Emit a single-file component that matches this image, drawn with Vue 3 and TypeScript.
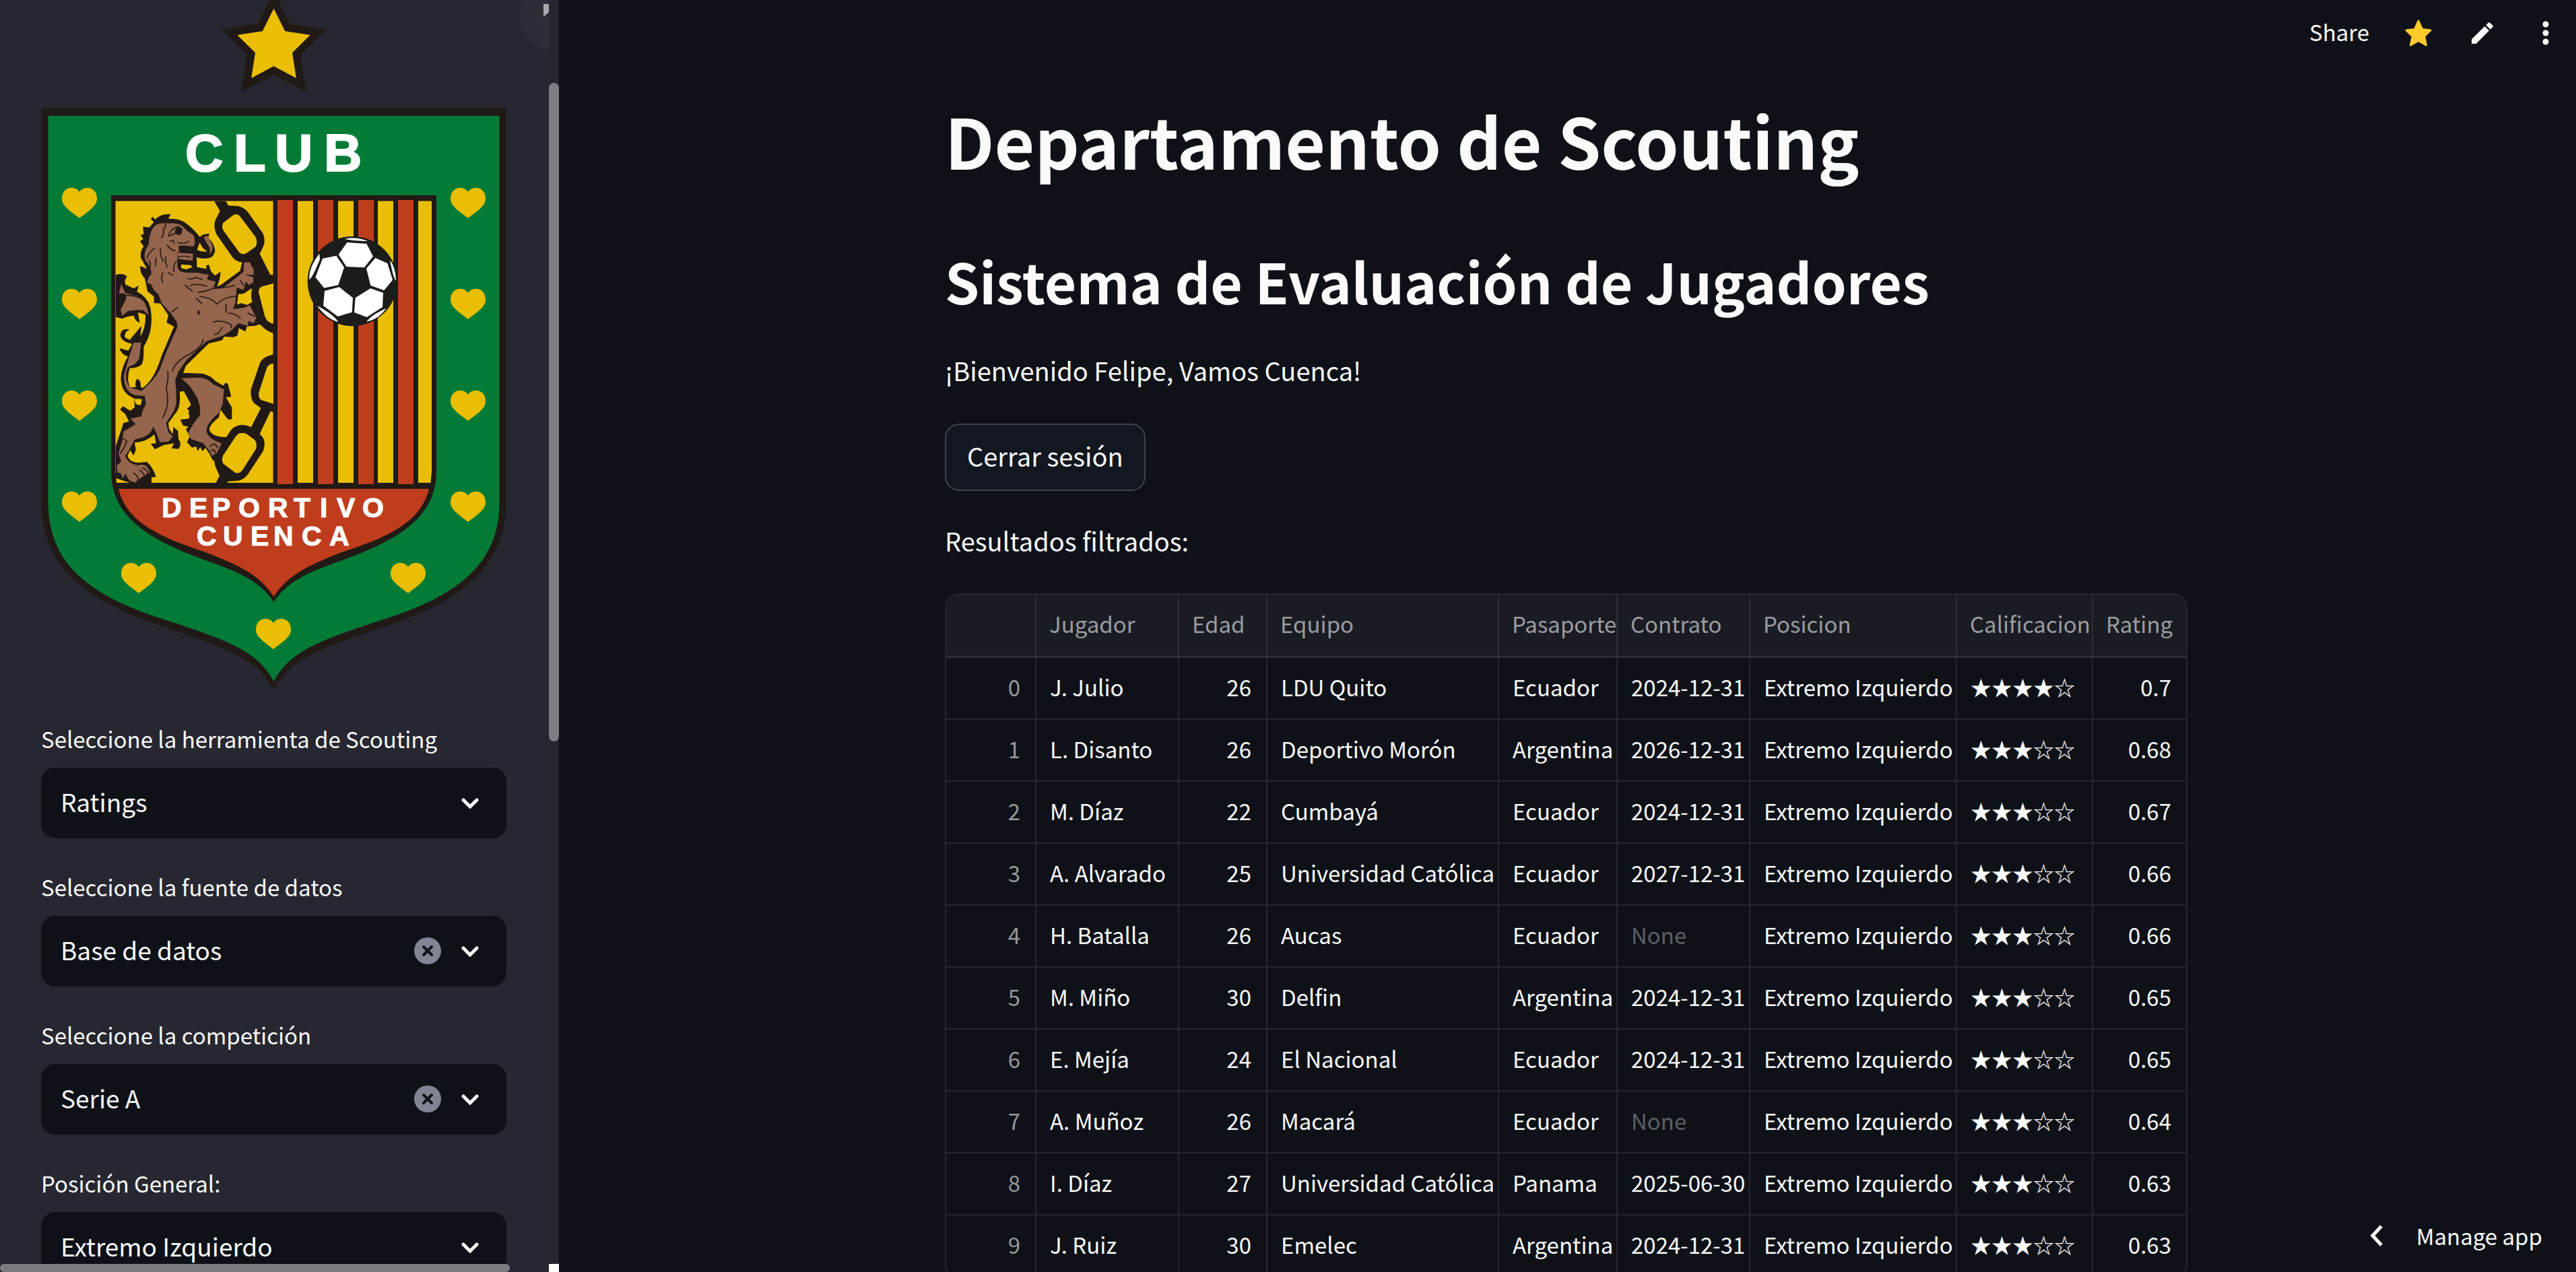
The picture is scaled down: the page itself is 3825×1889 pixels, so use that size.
<script setup lang="ts">
import { ref } from 'vue'

interface Field {
  id: string
  label: string
  value: string
  clearable: boolean
}

interface Player {
  name: string
  age: number
  team: string
  passport: string
  contract: string | null
  stars: number
  rating: string
}

const fields = ref<Field[]>([
  { id: 'tool', label: 'Seleccione la herramienta de Scouting', value: 'Ratings', clearable: false },
  { id: 'source', label: 'Seleccione la fuente de datos', value: 'Base de datos', clearable: true },
  { id: 'league', label: 'Seleccione la competición', value: 'Serie A', clearable: true },
  { id: 'position', label: 'Posición General:', value: 'Extremo Izquierdo', clearable: false },
])

const players: Player[] = [
  { name: 'J. Julio', age: 26, team: 'LDU Quito', passport: 'Ecuador', contract: '2024-12-31', stars: 4, rating: '0.7' },
  { name: 'L. Disanto', age: 26, team: 'Deportivo Morón', passport: 'Argentina', contract: '2026-12-31', stars: 3, rating: '0.68' },
  { name: 'M. Díaz', age: 22, team: 'Cumbayá', passport: 'Ecuador', contract: '2024-12-31', stars: 3, rating: '0.67' },
  { name: 'A. Alvarado', age: 25, team: 'Universidad Católica', passport: 'Ecuador', contract: '2027-12-31', stars: 3, rating: '0.66' },
  { name: 'H. Batalla', age: 26, team: 'Aucas', passport: 'Ecuador', contract: null, stars: 3, rating: '0.66' },
  { name: 'M. Miño', age: 30, team: 'Delfin', passport: 'Argentina', contract: '2024-12-31', stars: 3, rating: '0.65' },
  { name: 'E. Mejía', age: 24, team: 'El Nacional', passport: 'Ecuador', contract: '2024-12-31', stars: 3, rating: '0.65' },
  { name: 'A. Muñoz', age: 26, team: 'Macará', passport: 'Ecuador', contract: null, stars: 3, rating: '0.64' },
  { name: 'I. Díaz', age: 27, team: 'Universidad Católica', passport: 'Panama', contract: '2025-06-30', stars: 3, rating: '0.63' },
  { name: 'J. Ruiz', age: 30, team: 'Emelec', passport: 'Argentina', contract: '2024-12-31', stars: 3, rating: '0.63' },
]

const headers = ['', 'Jugador', 'Edad', 'Equipo', 'Pasaporte', 'Contrato', 'Posicion', 'Calificacion', 'Rating']

const starText = (n: number): string => '★'.repeat(n) + '☆'.repeat(5 - n)

const hearts: [number, number][] = [
  [118, 279], [118, 429], [118, 580], [118, 730],
  [695, 279], [695, 429], [695, 580], [695, 730],
  [206, 836], [606, 836], [406, 919],
]

const stripes = [
  { x: 412, red: true }, { x: 442, red: false }, { x: 472, red: true }, { x: 502, red: false },
  { x: 532, red: true }, { x: 561, red: false }, { x: 591, red: true },
]
</script>

<template>
  <div class="app">
    <aside class="sidebar">
      <div class="scroll">
        <svg class="crest" viewBox="61 0 691 1030" role="img" aria-label="Club Deportivo Cuenca">
          <defs>
            <clipPath id="field"><rect x="65" y="56" width="703" height="1256" /></clipPath>
          </defs>
          <polygon fill="#211915" points="406.5,-12 430.7,35.7 484.8,43.7 446,81 454.8,136.3 406.5,111 358.2,136.3 367,81 328.2,43.7 382.3,35.7" />
          <polygon fill="#e9be04" points="406.5,12.7 423.2,46.3 460.7,52 434,78.3 439.8,116 406.5,98.3 373.2,116 379,78.3 352.3,52 389.8,46.3" />
          <path fill="#211915" d="M61.5 160H751.5V745C751.5 840 688 892 572 930C478 962 430 978 406.5 1024C383 978 335 962 241 930C125 892 61.5 840 61.5 745Z" />
          <path fill="#037b37" d="M71.5 172H741.5V745C741.5 832 688 882 572 919C478 950 430 966 406.5 1012C383 966 335 950 241 919C125 882 71.5 832 71.5 745Z" />
          <path fill="#211915" d="M165 290H648V700C648 770 588 803 508 832C463 848 427 862 406.5 894C386 862 350 848 305 832C225 803 165 770 165 700Z" />
          <path fill="#bf3d1d" d="M176 726H637C625 775 578 797 508 820C463 838 429 851 406.5 886C384 851 350 838 305 820C235 797 188 775 176 726Z" />
          <path fill="#e9be04" d="M171.5 298.5H405.5V717H173L171.5 700Z" />
          <rect v-for="s in stripes" :key="s.x" :x="s.x" :y="s.red ? 297 : 298.5" width="23" :height="s.red ? 422 : 418.5" :fill="s.red ? '#bf3d1d' : '#e9be04'" />
          <path fill="#e9be04" d="M621 298.5H641V700L639.5 717H621Z" />
          <path v-for="h in hearts" :key="h.join()" fill="#e9be04" :transform="`translate(${h[0]} ${h[1]})`" d="M0 6C-4 0 -10 0 -12 0C-21 0 -26 7 -26 16C-26 27 -14 34 0 45C14 34 26 27 26 16C26 7 21 0 12 0C10 0 4 0 0 6Z" />
          <g class="crest-text">
            <text font-size="78" stroke-width="2" y="254" x="275 347 408 481">CLUB</text>
            <text font-size="41" y="768" x="240 281 315 354 398 436 475 500 538">DEPORTIVO</text>
            <text font-size="41" y="810" x="292 331 372 406 448 489">CUENCA</text>
          </g>

          <!-- football -->
          <g transform="translate(390 280) scale(0.33333)" fill="#fff">
            <circle cx="400" cy="413" r="200" fill="#1c1c1a" />
            <polygon points="376,240 463,246 492,302 453,352 373,348 338,294" />
            <polygon points="267,312 328,299 363,351 337,430 274,443 235,395" />
            <polygon points="502,309 556,333 579,407 541,454 481,432 462,356" />
            <polygon points="341,439 402,487 398,551 335,570 270,522 276,456" />
            <polygon points="480,445 537,464 534,528 464,573 408,552 413,487" />
            <path d="M365 225Q415 213 468 234Q415 236 365 225ZM253 290Q205 350 208 405Q222 398 255 315ZM567 318Q592 350 594 410Q582 402 567 318ZM242 522Q290 585 337 594Q315 560 242 522ZM551 533Q520 580 463 594Q480 565 551 533Z" />
          </g>

          <!-- chain and lion -->
          <g transform="translate(150 280) scale(0.33333)">
            <g clip-path="url(#field)">
              <path fill="#211915" d="M503 54H555L567 76L610 78Q637 83 655 106L720 198Q736 228 722 260L707 290L754 384L770 386V645Q735 635 712 608L690 600L672 500Q664 460 672 430L680 330L625 328Q600 324 585 305L515 205Q500 175 508 145L530 100Z" />
              <path fill="#211915" d="M770 737L735 750Q712 762 705 785L668 895Q664 930 680 955L712 978L669 1063Q630 1045 600 1060Q580 1070 570 1090L508 1185Q500 1210 510 1240L528 1280L510 1314H560L565 1305L605 1302Q635 1300 655 1272L722 1170Q735 1135 722 1110L707 1093L755 992L770 996Z" />
              <g fill="#e9be04">
                <path d="M545 152L590 118Q606 110 618 122L688 215Q698 235 690 258L648 288Q630 298 616 285L545 187Q535 165 545 152Z" />
                <path d="M770 422L715 437Q700 445 703 465L730 570Q740 600 770 602Z" />
                <path d="M770 779Q745 782 738 800L703 910Q700 935 715 943L770 960Z" />
                <path d="M612 1092Q630 1085 648 1093L683 1118Q698 1135 690 1160L630 1255Q615 1272 598 1266L545 1226Q535 1210 543 1190L600 1105Z" />
              </g>

              <!-- tail -->
              <path fill="#211915" d="M65 385Q100 375 116 392Q100 410 110 428L145 445Q160 440 168 430L160 460Q205 480 220 530Q238 630 190 704Q192 770 180 785Q160 800 128 800Q112 850 130 885L155 885Q150 860 160 848Q178 850 177 885L210 900L200 940L150 935Q90 915 88 845Q90 800 120 748Q90 740 82 711L122 722L138 692Q85 680 86 650Q92 620 128 628Q100 640 108 665L128 674L180 612L175 660Q200 620 198 562L165 552L172 597Q150 590 146 566Q110 570 95 580L65 572Z" />
              <path fill="#95654d" d="M90 425L108 465L165 480Q205 505 211 565L190 543L165 541L120 545L95 568L87 540L110 497L112 480L80 470ZM145 688L178 686L170 755Q155 785 130 790L108 810Q125 750 145 688Z" />

              <!-- body outline -->
              <path fill="#211915" d="M235 150L222 135L230 126L242 138Q262 112 310 114L300 134Q345 134 372 150Q412 178 440 216Q455 200 482 202L478 220Q504 245 508 275Q505 305 480 310Q450 315 426 306L427 350L470 358L468 345L480 338L490 370L508 388L533 370Q530 410 517 435L530 432L620 366L628 328L700 300L700 420L655 468L612 470L606 515L625 510L650 518L672 506L692 535L705 605L685 612L650 614L643 637L614 622L608 655L590 662L548 660L540 676L480 690L378 790L366 821L450 824Q485 830 510 858L545 878L555 865L565 870L580 927L556 930L583 975V1028L565 1028L532 985L525 1020Q484 1050 482 1075Q495 1108 560 1108L542 1150L500 1215L482 1180L465 1155L452 1170L442 1152L430 1170L425 1150L405 1154L383 1130L395 1105L378 1072L390 1062L365 1055L353 1030L390 1025L402 1000L383 980L402 965L398 935L370 902L350 905Q356 960 340 990L300 1045L303 1070L320 1095L322 1062L343 1080L345 1115Q362 1140 345 1160L315 1157L325 1135L280 1142L240 1162L222 1138L245 1135L238 1095Q200 1130 150 1132L155 1165L145 1190L130 1165L118 1190Q125 1218 165 1222L205 1218Q230 1240 245 1284L225 1288V1312H130L65 1290V1150L85 1090L100 1045L125 1038L108 1005L85 985L98 970L130 990L150 975L148 935L180 892Q235 860 270 745L325 615L292 597L300 565L265 512L236 510L235 480L207 458L195 400Q172 380 175 345L205 358L178 310Q172 280 190 258L174 235L188 225L176 205H190L187 170L215 173Z" />

              <!-- body fill -->
              <path fill="#95654d" d="M240 165Q262 150 310 155Q355 150 380 185L412 208Q425 240 412 258L360 254Q340 262 350 280L340 285V325Q336 370 370 374L430 375L480 385L472 405L510 415Q505 435 500 440L540 445L605 395L635 370L637 330L662 328Q668 345 680 360V385L640 383L678 395V418L658 430L645 415L635 452L605 440L598 510L588 537L640 530L662 520L692 575L680 600L655 590V612L612 600L580 632L545 655L470 680L380 765L345 815L330 855L335 900V960L325 990L290 1045L300 1085L320 1105L300 1128L262 1130L245 1085L232 1060Q225 1105 150 1118L125 1165L108 1190Q118 1225 165 1233Q205 1220 218 1265L190 1280L150 1310L125 1300L108 1270L98 1292L88 1268L73 1265L70 1235L90 1215L78 1180L95 1120L100 1082L155 1050L130 1025L180 1015L185 990L200 960L195 925L150 920Q100 905 102 830Q125 770 145 688L178 686L170 755Q155 785 130 790Q108 800 112 850Q120 890 160 895L180 902Q235 855 260 810L290 730L340 618L338 595L310 555L270 510L255 470L238 455L222 425L205 420Q212 390 225 380Q222 345 198 320Q185 290 212 250Q215 190 240 165Z" />
              <path fill="#95654d" d="M358 845L440 842Q475 845 500 872L548 895L542 960L525 1000Q470 1045 470 1080Q475 1115 538 1135L515 1180L495 1190L480 1165L455 1135L400 1115L388 1090L410 1050L440 1010L440 970L428 930L395 880Z" />
              <path fill="#95654d" d="M458 218Q465 208 478 212Q480 225 495 250Q502 275 484 294Q490 262 470 242Z" />

              <!-- gaps showing the field -->
              <g fill="#e9be04">
                <path d="M357 338L400 341L407 350L380 360L357 355Z" />
                <path d="M440 240Q450 268 474 280Q450 285 427 273Z" />
                <path d="M618 480L672 444L668 485L672 505L658 514L640 515L622 510L608 518Z" />
                <path d="M150 936L182 938L178 962Q165 970 152 955Z" />
              </g>

              <!-- face, mane and muscle detail -->
              <path fill="#211915" d="M345 256Q380 250 400 262Q440 268 425 275L408 283L372 285L350 280ZM330 185Q345 160 362 180Q365 205 345 208L330 200ZM80 470Q108 460 112 482Q108 498 80 495ZM430 540Q445 545 438 560L430 560ZM345 860L395 880L440 970V1010L405 1050L390 1000L400 960L370 905Z" />
              <path fill="none" stroke="#211915" stroke-width="5" stroke-linecap="round" d="M285 158Q295 170 278 180Q280 205 270 220M302 212Q305 180 345 170M302 212L335 198M308 235Q325 225 325 245M342 240Q375 250 390 234M295 252Q310 275 330 277M342 305Q370 295 400 312M265 268Q262 300 278 325M245 310L242 345M288 305Q285 330 295 350M215 320Q225 345 212 375M240 265Q210 285 205 310M335 325Q320 345 325 370M275 375Q265 395 275 418M300 375L318 385M385 400Q400 410 420 395L450 405M375 432L408 458M398 432Q430 420 470 435M430 462Q470 460 495 445Q540 445 595 432M440 480Q500 490 515 515Q555 480 600 480M425 490L448 512M557 515V550M565 555Q600 555 620 578M655 555L685 570M620 410L635 430M500 595Q530 585 562 598Q590 610 580 620M540 618Q525 650 505 650M340 530L315 550M455 672Q455 700 400 735Q335 765 318 812M297 815Q302 850 290 890Q310 960 275 1020M100 475Q165 475 188 497M100 1115L115 1125Q105 1155 85 1180M145 1268Q175 1285 160 1308M172 1255Q195 1270 192 1285M185 1245Q212 1255 208 1270M485 1150Q505 1125 520 1155M490 1168Q505 1155 508 1178" />
              <path fill="#95654d" d="M341 286L410 290L408 320L370 318L341 312Z" />
              <path fill="none" stroke="#211915" stroke-width="4" d="M342 305Q370 297 400 306" />
            </g>
          </g>
        </svg>

        <form class="fields" @submit.prevent>
          <div v-for="f in fields" :key="f.id" class="field">
            <label :for="f.id">{{ f.label }}</label>
            <div class="control">
              <select :id="f.id" v-model="f.value">
                <option :value="f.value">{{ f.value }}</option>
              </select>
              <button v-if="f.clearable" type="button" class="clear" aria-label="Borrar">
                <svg viewBox="0 0 40 40" width="40" height="40">
                  <circle cx="20" cy="20" r="20" fill="#808495" />
                  <path d="M14 14L26 26M26 14L14 26" stroke="#0e1117" stroke-width="4" stroke-linecap="round" />
                </svg>
              </button>
              <svg class="chevron" viewBox="0 0 26 16" width="26" height="16">
                <path d="M3 3L13 13L23 3" fill="none" stroke="#fafafa" stroke-width="5" stroke-linecap="round" />
              </svg>
            </div>
          </div>
        </form>

        <button type="button" class="collapse" aria-label="Cerrar barra lateral">
          <svg viewBox="0 0 104 104" width="104" height="104">
            <path d="M34 33H42V45L34 52Z" fill="#a8a8ad" />
          </svg>
        </button>
      </div>
      <div class="track-y"><div class="thumb-y"></div></div>
      <div class="track-x"><div class="thumb-x"></div></div>
      <div class="corner"></div>
    </aside>

    <main class="main">
      <nav class="toolbar">
        <button type="button" class="share">Share</button>
        <button type="button" aria-label="Favorito">
          <svg viewBox="0 0 40 40" width="40" height="40">
            <path d="M20 2L25.500 14.500L38 16L28.700 25L31.500 38L20 31.500L8.500 38L11.300 25L2 16L14.500 14.500Z" fill="#fbca2c" stroke="#fbca2c" stroke-width="3" stroke-linejoin="round" />
          </svg>
        </button>
        <button type="button" aria-label="Editar">
          <svg viewBox="0 0 32 32" width="32" height="32" fill="#fafafa">
            <path d="M0 25.300V32H6.700L26 12.500L19.500 6Z" />
            <path d="M21.300 4.200L24.500 1Q26 -0.500 27.500 1L31 4.500Q32.500 6 31 7.500L27.800 10.700Z" />
          </svg>
        </button>
        <button type="button" class="more" aria-label="Más opciones">
          <svg viewBox="0 0 10 36" width="10" height="36" fill="#fafafa">
            <circle cx="5" cy="5" r="4.500" /><circle cx="5" cy="18" r="4.500" /><circle cx="5" cy="31" r="4.500" />
          </svg>
        </button>
      </nav>

      <div class="content">
        <h1>Departamento de Scouting</h1>
        <h2>Sistema de Evaluación de Jugadores</h2>
        <p>¡Bienvenido Felipe, Vamos Cuenca!</p>
        <button type="button" class="logout">Cerrar sesión</button>
        <p>Resultados filtrados:</p>
        <div class="grid">
          <table>
            <colgroup>
              <col class="c-index" /><col class="c-name" /><col class="c-age" /><col class="c-team" /><col class="c-pass" />
              <col class="c-contract" /><col class="c-pos" /><col class="c-stars" /><col class="c-rating" />
            </colgroup>
            <thead>
              <tr><th v-for="h in headers" :key="h" scope="col">{{ h }}</th></tr>
            </thead>
            <tbody>
              <tr v-for="(p, i) in players" :key="p.name">
                <td class="num muted">{{ i }}</td>
                <td>{{ p.name }}</td>
                <td class="num">{{ p.age }}</td>
                <td>{{ p.team }}</td>
                <td>{{ p.passport }}</td>
                <td :class="{ none: p.contract === null }">{{ p.contract ?? 'None' }}</td>
                <td>Extremo Izquierdo</td>
                <td class="stars">{{ starText(p.stars) }}</td>
                <td class="num">{{ p.rating }}</td>
              </tr>
            </tbody>
          </table>
        </div>
      </div>

      <button type="button" class="manage">
        <svg viewBox="0 0 19 32" width="19" height="32">
          <path d="M17 2L4 16L17 30" fill="none" stroke="#fff" stroke-width="5" />
        </svg>
        <span>Manage app</span>
      </button>
    </main>
  </div>
</template>

<style>
html,
body {
  background: #0e1117;
}
</style>

<style scoped>
.app {
  display: flex;
  height: 100vh;
  overflow: hidden;
  color: #fafafa;
  background: #0e1117;
  font-family: "Noto Sans CJK SC", "Noto Sans", sans-serif;
  font-size: 38px;
}

button,
select {
  margin: 0;
  padding: 0;
  border: 0;
  background: none;
  color: inherit;
  font: inherit;
}

.sidebar {
  display: grid;
  grid-template-columns: minmax(0, 1fr) 15px;
  grid-template-rows: minmax(0, 1fr) 12px;
  flex: 0 0 830px;
  background: #262730;
}

.scroll {
  position: relative;
  overflow: hidden;
  padding: 0 63px 0 61px;
}

.crest {
  display: block;
  width: 100%;
  height: auto;
}

.crest-text {
  fill: #fff;
  stroke: #fff;
  stroke-width: 1px;
  font-family: "Liberation Sans", Arial, sans-serif;
  font-weight: 700;
}

.fields {
  display: flex;
  flex-direction: column;
  gap: 48px;
  margin-top: 43px;
}

.field label {
  display: block;
  margin-bottom: 19px;
  font-size: 33px;
  line-height: 48px;
}

.control {
  position: relative;
  height: 105px;
}

.control select {
  appearance: none;
  width: 100%;
  height: 100%;
  padding: 0 140px 5px 29px;
  border-radius: 21px;
  background: #0e1117;
  font-size: 37px;
}

.clear {
  position: absolute;
  top: 32px;
  right: 97px;
  height: 40px;
}

.clear svg {
  display: block;
}

.chevron {
  position: absolute;
  top: 45px;
  right: 41px;
  pointer-events: none;
}

.collapse {
  position: absolute;
  top: -27px;
  right: -62px;
  width: 104px;
  height: 104px;
  border-radius: 50%;
  background: #2c2d36;
}

.thumb-y {
  height: 978px;
  margin-top: 123px;
  border-radius: 8px;
  background: #7e7d82;
}

.thumb-x {
  width: 757px;
  height: 12px;
  border-radius: 6px;
  background: #7b7a80;
}

.corner {
  background: #fff;
}

.main {
  position: relative;
  flex: 1;
  min-width: 0;
}

.toolbar {
  position: absolute;
  top: 0;
  right: 40px;
  display: flex;
  align-items: center;
  height: 98px;
}

.toolbar svg {
  display: block;
}

.share {
  margin-right: 53px;
  padding-bottom: 5px;
  font-size: 33px;
}

.toolbar button:nth-child(2) {
  margin-right: 59px;
}

.more {
  margin-left: 73px;
}

.content {
  display: flex;
  flex-direction: column;
  align-items: flex-start;
  max-width: 1849px;
  margin: 0 auto;
  padding-top: 146px;
}

h1,
h2,
p {
  margin: 0;
}

h1 {
  font-size: 103px;
  line-height: 124px;
  font-weight: 700;
}

h2 {
  margin: 96px 0 52px;
  font-size: 82px;
  line-height: 102px;
  font-weight: 600;
}

p {
  line-height: 60px;
}

.logout {
  height: 100px;
  margin: 49px 0 44px;
  padding: 0 31px 5px;
  border: 2px solid #41444c;
  border-radius: 21px;
  background: #131720;
}

.grid {
  margin-top: 48px;
  border: 2px solid #26282e;
  border-radius: 21px;
  overflow: hidden;
}

table {
  table-layout: fixed;
  width: 1841px;
  border-collapse: separate;
  border-spacing: 0;
  font-size: 33px;
  line-height: 48px;
}

.c-index { width: 134px; }
.c-name { width: 212px; }
.c-age { width: 131px; }
.c-team { width: 344px; }
.c-pass { width: 176px; }
.c-contract { width: 197px; }
.c-pos { width: 307px; }
.c-stars { width: 202px; }
.c-rating { width: 138px; }

th,
td {
  box-sizing: border-box;
  height: 92px;
  padding: 0 0 5px 20px;
  border-right: 2px solid #26282e;
  border-bottom: 2px solid #26282e;
  overflow: hidden;
  text-align: left;
  white-space: nowrap;
  font-weight: 400;
}

th {
  height: 94px;
  padding-left: 19px;
  border-color: #2d2f36;
  border-bottom-width: 3px;
  background: #1a1c24;
  color: #9b9ca0;
}

th:last-child,
td:last-child {
  border-right: 0;
}

td.num {
  padding-right: 22px;
  text-align: right;
}

td.muted {
  color: #97989c;
}

.none {
  color: #5d5f65;
}

td.stars {
  font-size: 31px;
}

.manage {
  position: absolute;
  right: 50px;
  bottom: 30px;
  display: flex;
  align-items: center;
  gap: 50px;
  font-size: 33px;
  line-height: 48px;
}
</style>
